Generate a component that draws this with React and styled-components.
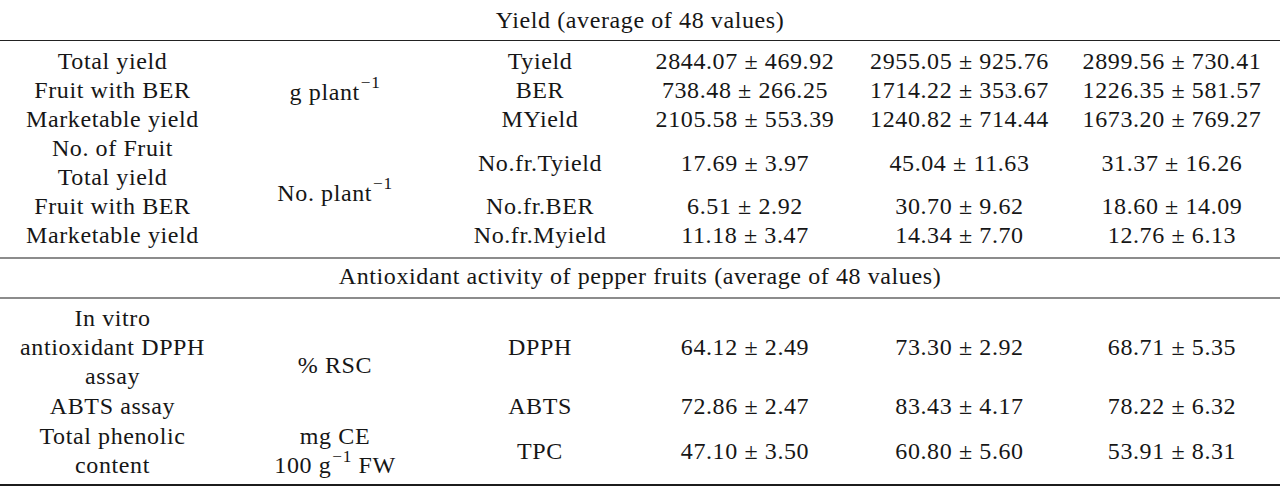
import React from 'react';
import styled, { createGlobalStyle } from 'styled-components';

const GlobalStyle = createGlobalStyle`
  html, body {
    margin: 0;
    padding: 0;
    background: #fff;
  }
  body {
    font-family: 'Liberation Serif', 'Times New Roman', serif;
    font-size: 24px;
    letter-spacing: 0.6px;
    color: #161616;
  }
`;

const Table = styled.div`
  width: 1280px;
  height: 487px;
  overflow: hidden;
`;

const SectionHead = styled.div`
  padding: ${p => p.$pad};
  border-bottom: ${p => p.$rule};
  line-height: 29px;
  text-align: center;
`;

const Body = styled.div`
  display: grid;
  grid-template-columns: 225px 220px 190px 220px 209px 1fr;
  row-gap: ${p => p.$gap || 0}px;
  padding: ${p => p.$pad};
  border-bottom: ${p => p.$rule};
`;

const Cell = styled.div`
  grid-column: ${p => p.$col};
  grid-row: ${p => p.$row};
  display: flex;
  flex-direction: column;
  align-items: center;
  justify-content: center;
  text-align: center;
  line-height: 29px;
  white-space: nowrap;
  padding-top: ${p => p.$nudge || 0}px;
`;

const Sup = styled.sup`
  font-size: 0.72em;
  line-height: 0;
  vertical-align: 0.66em;
  margin-left: 1px;
`;

const Minus1 = () => <Sup>−1</Sup>;

const yieldRows = [
  { label: ['Total yield'], abbr: 'Tyield', v: ['2844.07 ± 469.92', '2955.05 ± 925.76', '2899.56 ± 730.41'] },
  { label: ['Fruit with BER'], abbr: 'BER', v: ['738.48 ± 266.25', '1714.22 ± 353.67', '1226.35 ± 581.57'] },
  { label: ['Marketable yield'], abbr: 'MYield', v: ['2105.58 ± 553.39', '1240.82 ± 714.44', '1673.20 ± 769.27'] },
  { label: ['No. of Fruit', 'Total yield'], abbr: 'No.fr.Tyield', v: ['17.69 ± 3.97', '45.04 ± 11.63', '31.37 ± 16.26'] },
  { label: ['Fruit with BER'], abbr: 'No.fr.BER', v: ['6.51 ± 2.92', '30.70 ± 9.62', '18.60 ± 14.09'] },
  { label: ['Marketable yield'], abbr: 'No.fr.Myield', v: ['11.18 ± 3.47', '14.34 ± 7.70', '12.76 ± 6.13'] },
];

const antioxRows = [
  { label: ['In vitro', 'antioxidant DPPH', 'assay'], abbr: 'DPPH', v: ['64.12 ± 2.49', '73.30 ± 2.92', '68.71 ± 5.35'] },
  { label: ['ABTS assay'], abbr: 'ABTS', v: ['72.86 ± 2.47', '83.43 ± 4.17', '78.22 ± 6.32'] },
  { label: ['Total phenolic', 'content'], abbr: 'TPC', v: ['47.10 ± 3.50', '60.80 ± 5.60', '53.91 ± 8.31'] },
];

const DataRows = ({ rows }) =>
  rows.map((r, i) => (
    <React.Fragment key={r.abbr}>
      <Cell $col={1} $row={i + 1}>
        {r.label.map(l => (
          <span key={l}>{l}</span>
        ))}
      </Cell>
      <Cell $col={3} $row={i + 1}>{r.abbr}</Cell>
      {r.v.map((val, j) => (
        <Cell key={j} $col={4 + j} $row={i + 1}>
          {val}
        </Cell>
      ))}
    </React.Fragment>
  ));

const App = () => (
  <>
    <GlobalStyle />
    <Table>
      <SectionHead $pad="6px 0 5px" $rule="1px solid #222">
        Yield (average of 48 values)
      </SectionHead>
      <Body $pad="6px 0 7px" $rule="2px solid #8c8c8c">
        <DataRows rows={yieldRows} />
        <Cell $col={2} $row="1 / span 3" $nudge={3}>
          <span>
            g plant
            <Minus1 />
          </span>
        </Cell>
        <Cell $col={2} $row="4 / span 3" $nudge={2}>
          <span>
            No. plant
            <Minus1 />
          </span>
        </Cell>
      </Body>
      <SectionHead $pad="3px 0 6px" $rule="2px solid #8c8c8c">
        Antioxidant activity of pepper fruits (average of 48 values)
      </SectionHead>
      <Body $pad="5px 0 4px" $gap={1} $rule="2px solid #1c1c1c">
        <DataRows rows={antioxRows} />
        <Cell $col={2} $row="1 / span 2" $nudge={6}>
          <span>% RSC</span>
        </Cell>
        <Cell $col={2} $row={3}>
          <span>mg CE</span>
          <span>
            100 g
            <Minus1 /> FW
          </span>
        </Cell>
      </Body>
    </Table>
  </>
);

export default App;
